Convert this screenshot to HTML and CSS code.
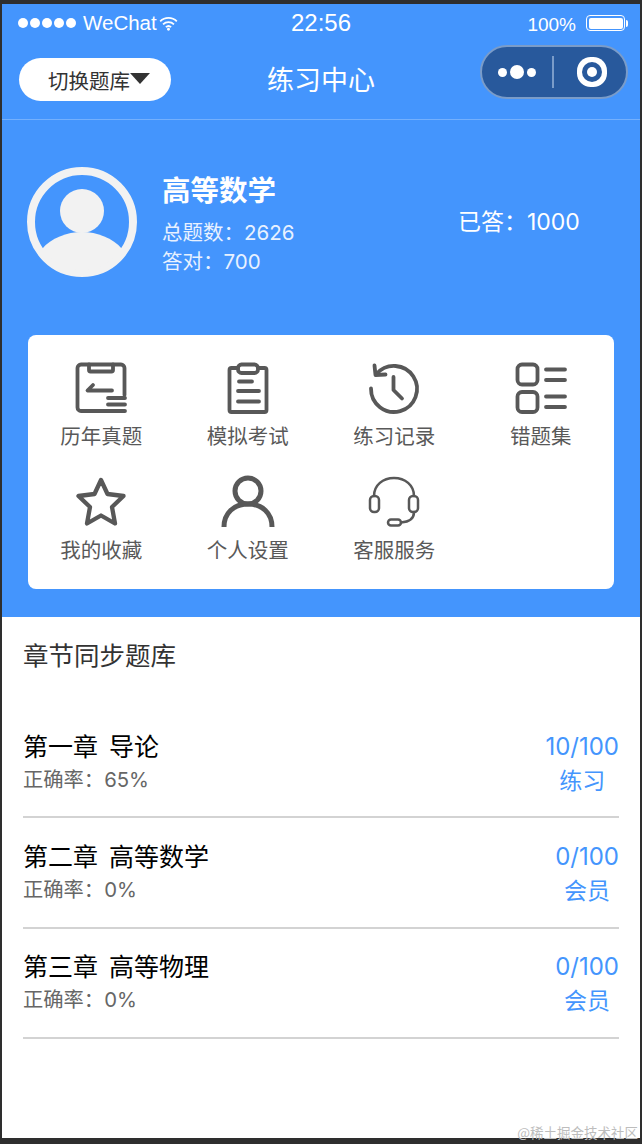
FILE: index.html
```html
<!DOCTYPE html>
<html lang="zh">

<head>
    <meta charset="UTF-8">
    <title>练习中心</title>
    <link rel="stylesheet" href="styles.css">
</head>

<body>
    <div class="phone">
        <header class="hero">
            <!-- Status bar -->
            <div class="status-bar">
                <div class="status-left">
                    <span class="signal"><i></i><i></i><i></i><i></i><i></i></span>
                    <span class="carrier">WeChat</span>
                    <svg class="wifi" viewBox="0 0 16 12" width="19" height="15">
                        <path d="M1 4.200a10 10 0 0 1 14 0M3.400 6.800a6.600 6.600 0 0 1 9.200 0M5.800 9.100a3.200 3.200 0 0 1 4.400 0" fill="none" stroke="#fff" stroke-width="1.500" />
                        <circle cx="8" cy="10.800" r="1.200" fill="#fff" />
                    </svg>
                </div>
                <div class="status-time">22:56</div>
                <div class="status-right">
                    <span class="percent">100%</span>
                    <span class="battery"><span class="battery-fill"></span></span>
                    <span class="battery-tip"></span>
                </div>
            </div>

            <!-- Nav bar -->
            <nav class="nav-bar">
                <button class="switch-bank">切换题库<span class="caret"></span></button>
                <h1 class="nav-title">练习中心</h1>
                <div class="capsule">
                    <span class="capsule-dots"><i></i><i class="big"></i><i></i></span>
                    <span class="capsule-line"></span>
                    <span class="capsule-target"></span>
                </div>
            </nav>

            <!-- Profile -->
            <section class="profile">
                <svg class="avatar" viewBox="0 0 110 110" width="110" height="110">
                    <circle cx="55" cy="55" r="51" fill="none" stroke="#f2f2f2" stroke-width="8" />
                    <circle cx="55" cy="44" r="22" fill="#f2f2f2" />
                    <path d="M15 82C24 71 40 65 55 65C70 65 86 71 95 82A48.500 48.500 0 0 1 15 82Z" fill="#f2f2f2" />
                </svg>
                <div class="profile-info">
                    <h2>高等数学</h2>
                    <p>总题数：2626</p>
                    <p>答对：700</p>
                </div>
                <div class="answered">已答：1000</div>
            </section>

            <!-- Menu panel -->
            <section class="panel">
                <a class="panel-item">
                    <svg viewBox="0 0 50 50" width="50" height="50" class="icon">
                        <path d="M32 48H5a3.500 3.500 0 0 1-3.500-3.500V5A3.500 3.500 0 0 1 5 1.500h40A3.500 3.500 0 0 1 48.500 5v27" />
                        <path d="M13 1.500v5.500a1.500 1.500 0 0 0 1.500 1.500h21a1.500 1.500 0 0 0 1.500-1.500V1.500" />
                        <path d="M17 22l-5.500 5.500H36" />
                        <path d="M32 35h17M32 41.500h17M32 48h17" />
                    </svg>
                    <span>历年真题</span>
                </a>
                <a class="panel-item">
                    <svg viewBox="0 0 50 50" width="50" height="50" class="icon">
                        <path d="M15 5H8.500A2 2 0 0 0 6.500 7v40a2 2 0 0 0 2 2h33a2 2 0 0 0 2-2V7a2 2 0 0 0-2-2H35" />
                        <rect x="15" y="1.500" width="20" height="8.500" rx="3.500" />
                        <path d="M16 18.500h13M15 28h21M15 38.500h21" />
                    </svg>
                    <span>模拟考试</span>
                </a>
                <a class="panel-item">
                    <svg viewBox="0 0 50 50" width="50" height="50" class="icon">
                        <path d="M7.500 11A23 23 0 1 1 2 25.500" />
                        <path d="M5.500 2.500L6.500 12L16.500 11.500" />
                        <path d="M24.500 14v13l8.500 8.500" />
                    </svg>
                    <span>练习记录</span>
                </a>
                <a class="panel-item">
                    <svg viewBox="0 0 50 50" width="50" height="50" class="icon">
                        <rect x="1.500" y="1.500" width="20" height="20" rx="4.500" />
                        <rect x="1.500" y="29" width="20" height="20" rx="4.500" />
                        <path d="M30 6.500h19M30 17h19M30 33.500h19M30 44h19" />
                    </svg>
                    <span>错题集</span>
                </a>
                <a class="panel-item">
                    <svg viewBox="0 0 50 50" width="50" height="50" class="icon star">
                        <path d="M25 3l6.500 14 16 2-11.500 11 3 16.500L25 38.500 11 46.500l3-16.500L2.500 19l16-2z" />
                    </svg>
                    <span>我的收藏</span>
                </a>
                <a class="panel-item">
                    <svg viewBox="0 0 50 50" width="50" height="50" class="icon person">
                        <circle cx="25" cy="14" r="13" />
                        <path d="M1 50C1 36 11 27 25 27S49 36 49 50" />
                    </svg>
                    <span>个人设置</span>
                </a>
                <a class="panel-item">
                    <svg viewBox="0 0 50 50" width="50" height="50" class="icon thin">
                        <path d="M5 19C5 8 14 1 25 1S45 8 45 19" />
                        <rect x="1" y="19" width="9" height="16" rx="4" />
                        <rect x="40" y="19" width="9" height="16" rx="4" />
                        <path d="M45 35C45 42 39 45 32 45.500" />
                        <rect x="19" y="42.500" width="13" height="6" rx="3" />
                    </svg>
                    <span>客服服务</span>
                </a>
            </section>
        </header>

        <!-- Chapter list -->
        <main class="chapters">
            <h3 class="chapters-title">章节同步题库</h3>
            <div class="chapter">
                <div>
                    <div class="chapter-name">第一章 导论</div>
                    <div class="chapter-rate">正确率：65%</div>
                </div>
                <div class="chapter-side">
                    <div class="chapter-count">10/100</div>
                    <div class="chapter-action">练习</div>
                </div>
            </div>
            <div class="chapter">
                <div>
                    <div class="chapter-name">第二章 高等数学</div>
                    <div class="chapter-rate">正确率：0%</div>
                </div>
                <div class="chapter-side">
                    <div class="chapter-count">0/100</div>
                    <div class="chapter-action">会员</div>
                </div>
            </div>
            <div class="chapter">
                <div>
                    <div class="chapter-name">第三章 高等物理</div>
                    <div class="chapter-rate">正确率：0%</div>
                </div>
                <div class="chapter-side">
                    <div class="chapter-count">0/100</div>
                    <div class="chapter-action">会员</div>
                </div>
            </div>
        </main>
    </div>

    <div class="watermark">@稀土掘金技术社区</div>
</body>

</html>
```

FILE: styles.css
```css
/* Global Styles */
html,
body {
    margin: 0;
    height: 1144px;
    overflow: hidden;
}

body {
    position: relative;
    background-color: #2e2e2e;
    padding: 4px 2px 6px 2px;
    box-sizing: border-box;
    font-family: Inter, "Noto Sans CJK SC", sans-serif;
}

.phone {
    background-color: #ffffff;
    height: 100%;
}

.hero {
    background-color: #4495fd;
    height: 613px;
    color: white;
    overflow: hidden;
}

/* Status bar */
.status-bar {
    height: 38px;
    display: grid;
    grid-template-columns: 273px auto 1fr;
    align-items: center;
    padding: 0 12px 0 16px;
    font-family: "Liberation Sans", sans-serif;
}

.status-left {
    display: flex;
    align-items: center;
}

.signal {
    display: flex;
    gap: 2px;
}

.signal i {
    width: 10px;
    height: 10px;
    border-radius: 50%;
    background-color: white;
}

.carrier {
    font-size: 20.500px;
    margin-left: 7px;
}

.wifi {
    margin-left: 2px;
}

.status-time {
    font-size: 24px;
}

.status-right {
    display: flex;
    align-items: center;
    justify-content: flex-end;
}

.percent {
    font-size: 19px;
    margin: 3px 10px 0 0;
}

.battery {
    width: 34px;
    height: 11px;
    border: 1.500px solid white;
    border-radius: 4px;
    padding: 1.500px;
    display: block;
}

.battery-fill {
    display: block;
    height: 100%;
    background-color: white;
    border-radius: 2px;
}

.battery-tip {
    width: 2px;
    height: 7px;
    margin-left: 1px;
    background-color: white;
    border-radius: 0 2px 2px 0;
}

/* Nav bar */
.nav-bar {
    height: 78px;
    border-bottom: 1px solid #74b0fd;
    display: grid;
    grid-template-columns: 248px auto 1fr;
    align-items: center;
    padding: 0 12px 0 17px;
    box-sizing: border-box;
}

.switch-bank {
    width: 152px;
    height: 43px;
    margin-top: -2px;
    border: none;
    border-radius: 22px;
    background-color: white;
    color: #333;
    font-family: inherit;
    font-size: 20.500px;
    padding: 0 0 0 8px;
    display: flex;
    align-items: center;
    justify-content: center;
}

.caret {
    width: 0;
    height: 0;
    border-left: 10px solid transparent;
    border-right: 10px solid transparent;
    border-top: 11px solid #333;
    margin-top: -3px;
}

.nav-title {
    margin: -4px 0 0 0;
    font-size: 27px;
    font-weight: 400;
}

.capsule {
    justify-self: end;
    width: 148px;
    height: 54px;
    box-sizing: border-box;
    border: 2px solid #7a9cc9;
    border-radius: 27px;
    background-color: #28599c;
    display: flex;
    align-items: center;
    padding-left: 16px;
    margin-top: -17px;
}

.capsule-dots {
    display: flex;
    align-items: center;
    gap: 3px;
}

.capsule-dots i {
    width: 9px;
    height: 9px;
    border-radius: 50%;
    background-color: white;
}

.capsule-dots i.big {
    width: 14px;
    height: 14px;
}

.capsule-line {
    width: 2px;
    height: 32px;
    margin-left: 16px;
    background-color: #7a9cc9;
}

.capsule-target {
    width: 10px;
    height: 10px;
    margin-left: 33px;
    border-radius: 50%;
    background-color: white;
    box-shadow: 0 0 0 5px #28599c, 0 0 0 10px white;
}

/* Profile */
.profile {
    display: flex;
    align-items: center;
    height: 215px;
    padding-left: 25px;
    box-sizing: border-box;
}

.avatar {
    margin-top: -11px;
}

.profile-info {
    margin: -8px 0 0 26px;
    width: 296px;
}

.profile-info h2 {
    margin: 0 0 7px -1px;
    font-size: 28.500px;
    line-height: 40px;
    font-weight: 700;
}

.profile-info p {
    margin: 0 0 0 -1px;
    font-size: 20.500px;
    line-height: 29px;
    color: #e8f1ff;
}

.answered {
    font-size: 23px;
    margin-top: -16px;
    margin-left: -1px;
}

/* Menu panel */
.panel {
    width: 586px;
    height: 254px;
    margin-left: 26px;
    background-color: white;
    border-radius: 8px;
    display: grid;
    grid-template-columns: repeat(4, 1fr);
    grid-auto-rows: 114px;
    padding-top: 28px;
    box-sizing: border-box;
}

.panel-item {
    display: flex;
    flex-direction: column;
    align-items: center;
    color: #595959;
    font-size: 20.500px;
}

.panel-item span {
    line-height: 29px;
    margin-top: 9px;
}

.icon {
    display: block;
    overflow: visible;
    fill: none;
    stroke: #585858;
    stroke-width: 3.800;
    stroke-linecap: round;
    stroke-linejoin: round;
}

.icon.star {
    stroke-width: 4.300;
}

.icon.person {
    stroke-width: 5;
    stroke-linecap: butt;
}

.icon.thin {
    stroke-width: 2.500;
}

/* Chapter list */
.chapters {
    padding: 0 21px;
}

.chapters-title {
    margin: 0;
    height: 91px;
    font-size: 25.500px;
    font-weight: 400;
    line-height: 77px;
    color: #333;
}

.chapter {
    height: 110.400px;
    box-sizing: border-box;
    border-bottom: 2px solid #d3d3d3;
    display: flex;
    justify-content: space-between;
    padding-top: 20.500px;
}

.chapter-name {
    font-size: 25px;
    line-height: 36px;
    word-spacing: 4px;
    color: #000;
}

.chapter-rate {
    font-size: 20.300px;
    line-height: 29px;
    color: #666;
}

.chapter-side {
    text-align: center;
    color: #4495fd;
}

.chapter-count {
    font-size: 24px;
    line-height: 36px;
}

.chapter-action {
    font-size: 23px;
    line-height: 33px;
}

.watermark {
    position: absolute;
    right: 4px;
    bottom: 3px;
    font-family: "Noto Sans CJK SC", sans-serif;
    font-size: 13.500px;
    line-height: 18px;
    color: #bdbdbd;
}
```
